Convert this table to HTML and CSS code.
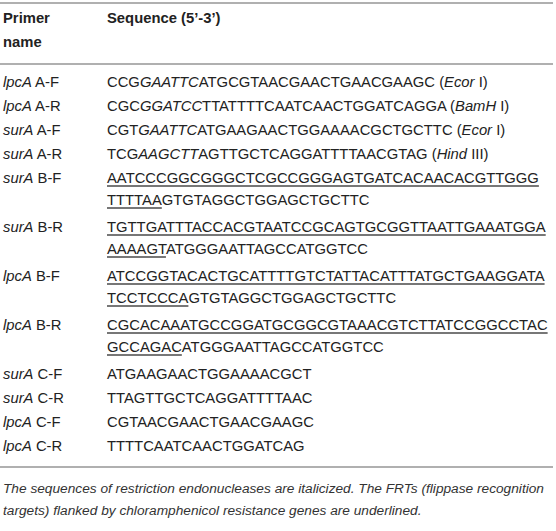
FILE: index.html
```html
<!DOCTYPE html>
<html>
<head>
<meta charset="utf-8">
<link rel="stylesheet" href="styles.css">
</head>
<body>
<div class="wrap">
<table class="primers">
<thead>
<tr><th class="c1">Primer<br>name</th><th class="c2">Sequence (5’-3’)</th></tr>
</thead>
<tbody>
<tr class="first"><td><i>lpcA</i> A-F</td><td>CCG<i>GAATTC</i>ATGCGTAACGAACTGAACGAAGC (<i>Ecor</i> I)</td></tr>
<tr><td><i>lpcA</i> A-R</td><td>CGC<i>GGATCC</i>TTATTTTCAATCAACTGGATCAGGA (<i>BamH</i> I)</td></tr>
<tr><td><i>surA</i> A-F</td><td>CGT<i>GAATTC</i>ATGAAGAACTGGAAAACGCTGCTTC (<i>Ecor</i> I)</td></tr>
<tr><td><i>surA</i> A-R</td><td>TCG<i>AAGCTT</i>AGTTGCTCAGGATTTTAACGTAG (<i>Hind</i> III)</td></tr>
<tr class="dbl"><td><i>surA</i> B-F</td><td><u>AATCCCGGCGGGCTCGCCGGGAGTGATCACAACACGTTGGG</u><br><u>TTTTAA</u>GTGTAGGCTGGAGCTGCTTC</td></tr>
<tr class="dbl"><td><i>surA</i> B-R</td><td><u>TGTTGATTTACCACGTAATCCGCAGTGCGGTTAATTGAAATGGA</u><br><u>AAAAGT</u>ATGGGAATTAGCCATGGTCC</td></tr>
<tr class="dbl"><td><i>lpcA</i> B-F</td><td><u>ATCCGGTACACTGCATTTTGTCTATTACATTTATGCTGAAGGATA</u><br><u>TCCTCCCA</u>GTGTAGGCTGGAGCTGCTTC</td></tr>
<tr class="dbl"><td><i>lpcA</i> B-R</td><td><u>CGCACAAATGCCGGATGCGGCGTAAACGTCTTATCCGGCCTAC</u><br><u>GCCAGAC</u>ATGGGAATTAGCCATGGTCC</td></tr>
<tr><td><i>surA</i> C-F</td><td>ATGAAGAACTGGAAAACGCT</td></tr>
<tr><td><i>surA</i> C-R</td><td>TTAGTTGCTCAGGATTTTAAC</td></tr>
<tr><td><i>lpcA</i> C-F</td><td>CGTAACGAACTGAACGAAGC</td></tr>
<tr class="last"><td><i>lpcA</i> C-R</td><td>TTTTCAATCAACTGGATCAG</td></tr>
</tbody>
</table>
<p class="note">The sequences of restriction endonucleases are italicized. The FRTs (flippase recognition targets) flanked by chloramphenicol resistance genes are underlined.</p>
</div>
</body>
</html>
```
FILE: styles.css
```css
html, body {
  margin: 0;
  padding: 0;
  background: #fff;
}
.wrap {
  width: 553px;
  padding-top: 2px;
  font-family: "Liberation Sans", Arial, sans-serif;
  color: #222;
}
.primers {
  width: 100%;
  border-collapse: collapse;
  font-size: 14.8px;
  line-height: 22px;
}
.primers thead th {
  text-align: left;
  font-weight: bold;
  vertical-align: top;
  line-height: 24px;
  border-top: 2px solid #b0b0b0;
  border-bottom: 2px solid #b0b0b0;
  padding: 2px 0 9px 3px;
}
.primers th.c1 {
  width: 101px;
}
.primers td {
  vertical-align: top;
  padding: 1px 0 1px 3px;
  white-space: nowrap;
}
.primers tr.dbl td {
  padding-bottom: 4px;
}
.primers tr.first td {
  padding-top: 6px;
}
.primers tr.last td {
  padding-bottom: 9px;
  border-bottom: 2px solid #b0b0b0;
}
.primers u {
  text-decoration-color: #777;
  text-decoration-thickness: 2px;
  text-underline-offset: 2px;
}
.note {
  margin: 10px 0 0 3px;
  font-size: 13.7px;
  line-height: 22px;
  font-style: italic;
  color: #333;
}
```
